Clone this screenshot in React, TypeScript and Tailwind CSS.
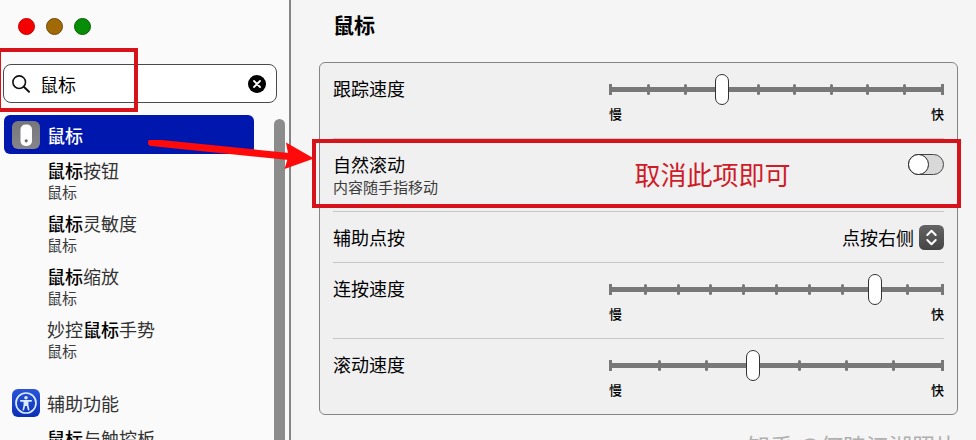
import { useState } from 'react';

type SliderRowProps = {
  id: string;
  label: string;
  steps: number;
  initial: number;
  last?: boolean;
};

const sidebarItems = [
  { before: '', after: '按钮' },
  { before: '', after: '灵敏度' },
  { before: '', after: '缩放' },
  { before: '妙控', after: '手势' },
];

const MouseIcon = () => (
  <svg viewBox="0 0 28 28" className="size-7 shrink-0" aria-hidden="true">
    <defs>
      <linearGradient id="mouse-bg" x1="0" y1="0" x2="0" y2="1">
        <stop offset="0" stopColor="#77777b" />
        <stop offset="1" stopColor="#85858a" />
      </linearGradient>
    </defs>
    <rect width="28" height="28" rx="6" fill="url(#mouse-bg)" />
    <rect x="8.5" y="3.5" width="11.5" height="21.5" rx="5" fill="#fff" />
    <circle cx="14.2" cy="19.8" r="1.6" fill="#6b6b70" />
  </svg>
);

const AccessibilityIcon = () => (
  <svg viewBox="0 0 28 28" className="size-7 shrink-0" aria-hidden="true">
    <defs>
      <linearGradient id="access-bg" x1="0" y1="0" x2="0" y2="1">
        <stop offset="0" stopColor="#2a55d8" />
        <stop offset="1" stopColor="#0b2fb5" />
      </linearGradient>
    </defs>
    <rect width="28" height="28" rx="6" fill="url(#access-bg)" />
    <circle cx="14" cy="14" r="10" fill="none" stroke="#d9ecff" strokeWidth="1.7" />
    <circle cx="14" cy="8.7" r="1.8" fill="#d9ecff" />
    <path
      d="M8.8 11.8h10.4M12.4 12v4.200l-1 4.400M15.600 12v4.200l1 4.400"
      fill="none"
      stroke="#d9ecff"
      strokeWidth="1.7"
      strokeLinecap="round"
      strokeLinejoin="round"
    />
    <path d="M12 11.800h4v5.200h-4z" fill="#d9ecff" />
  </svg>
);

const SliderRow = ({ id, label, steps, initial, last }: SliderRowProps) => {
  const [value, setValue] = useState(initial);

  return (
    <div
      className={
        last
          ? 'flex justify-between pt-[11px] pb-3'
          : 'flex justify-between border-b border-[#c6c8c8] pt-[11px] pb-3'
      }
    >
      <label htmlFor={id} className="text-lg leading-7 text-black">
        {label}
      </label>
      <div className="w-[335px]">
        <div className="grid h-7 items-center">
          <div className="col-start-1 row-start-1 flex h-[11px] items-center border-x-3 border-[#787878]">
            <div className="h-[5px] w-full bg-[#787878]" />
          </div>
          <div className="col-start-1 row-start-1 mx-0.5 flex justify-between">
            {Array.from({ length: steps }, (_, i) => (
              <span
                key={i}
                className="h-[11px] w-[3px] rounded-sm bg-[#787878] first:invisible last:invisible"
              />
            ))}
          </div>
          <input
            id={id}
            type="range"
            min={0}
            max={steps - 1}
            value={value}
            onChange={(e) => setValue(Number(e.target.value))}
            className="col-start-1 row-start-1 -mx-1 h-[31px] appearance-none bg-transparent [&::-webkit-slider-thumb]:h-[31px] [&::-webkit-slider-thumb]:w-3.5 [&::-webkit-slider-thumb]:appearance-none [&::-webkit-slider-thumb]:rounded-full [&::-webkit-slider-thumb]:border [&::-webkit-slider-thumb]:border-[#333] [&::-webkit-slider-thumb]:bg-white"
          />
        </div>
        <div className="flex justify-between text-[13px] leading-6 font-medium text-black">
          <span>慢</span>
          <span>快</span>
        </div>
      </div>
    </div>
  );
};

const Sidebar = () => {
  const [query, setQuery] = useState('鼠标');

  return (
    <aside className="flex w-[291px] shrink-0 flex-col border-r-2 border-[#858585] bg-[#fafafa]">
      <div className="flex gap-[11px] pt-[18px] pl-[18px]">
        <button aria-label="关闭" className="size-[17px] rounded-full border border-[#c80000] bg-[#f50000]" />
        <button aria-label="最小化" className="size-[17px] rounded-full border border-[#6e4a0c] bg-[#a16a06]" />
        <button aria-label="缩放" className="size-[17px] rounded-full border border-[#056005] bg-[#078d07]" />
      </div>

      <div className="relative mt-[29px] mr-3 ml-[3px] flex h-[39px] items-center rounded-lg border border-[#4a4a4a] bg-white pr-2.5 pl-2">
        <svg viewBox="0 0 18 18" className="size-[18px] shrink-0" aria-hidden="true">
          <circle cx="7.2" cy="7.2" r="6.3" fill="none" stroke="#111" strokeWidth="1.6" />
          <path d="M11.8 11.8l5.2 5" stroke="#111" strokeWidth="1.9" strokeLinecap="round" />
        </svg>
        <input
          type="text"
          aria-label="搜索"
          value={query}
          onChange={(e) => setQuery(e.target.value)}
          className="ml-2.5 min-w-0 flex-1 bg-transparent text-lg leading-7 text-black outline-none"
        />
        <button aria-label="清除" onClick={() => setQuery('')} className="size-[18px] shrink-0">
          <svg viewBox="0 0 18 18" className="size-full">
            <circle cx="9" cy="9" r="9" fill="#000" />
            <path d="M6 6l6 6M12 6l-6 6" stroke="#fff" strokeWidth="1.8" strokeLinecap="round" />
          </svg>
        </button>
        {/* highlight around the search term */}
        <div className="pointer-events-none absolute -top-[17px] -left-[7px] h-16 w-[141px] border-4 border-[#d6121a]" />
      </div>

      <div className="mt-3 flex min-h-0 flex-1 justify-between pr-1 pl-1">
        <nav className="w-[250px] overflow-hidden">
          <a href="#mouse" className="flex h-[39px] items-center gap-[7px] rounded-md bg-[#0017ad] pl-2 text-lg font-medium text-white">
            <MouseIcon />
            鼠标
          </a>
          <ul className="mt-1 pl-[43px]">
            {sidebarItems.map((item) => (
              <li key={item.before + item.after} className="mb-[9px]">
                <a href="#mouse" className="block">
                  <span className="block text-lg leading-6 text-[#333]">
                    {item.before}
                    <span className="font-medium text-black">鼠标</span>
                    {item.after}
                  </span>
                  <span className="block text-[15px] leading-5 text-[#3c3c3c]">鼠标</span>
                </a>
              </li>
            ))}
          </ul>
          <a href="#accessibility" className="mt-[22px] flex h-[39px] items-center gap-[7px] pl-2 text-lg text-[#333]">
            <AccessibilityIcon />
            辅助功能
          </a>
          <a href="#trackpad" className="mt-1 block pl-[43px] text-lg leading-6 text-[#333]">
            <span className="font-medium text-black">鼠标</span>与触控板
          </a>
        </nav>
        <div className="mt-1 w-[11px] rounded-t-full bg-[#8c8c8c]" />
      </div>
    </aside>
  );
};

const App = () => {
  const [natural, setNatural] = useState(false);

  return (
    <div className="relative flex h-screen overflow-hidden bg-[#f5f5f5] font-['Noto_Sans_CJK_SC',sans-serif] text-black">
      <Sidebar />

      <main className="min-w-0 flex-1 pt-2 pr-[18px] pl-7">
        <h1 className="pl-3.5 text-[21px] leading-8 font-bold">鼠标</h1>

        <section className="mt-[22px] rounded-md border border-[#858585] bg-[#f0f0f0] px-[13px]">
          <SliderRow id="tracking" label="跟踪速度" steps={10} initial={3} />

          <div className="relative flex justify-between border-b border-[#c6c8c8] pt-[11px] pb-[15px]">
            <div>
              <label htmlFor="natural" className="block text-lg leading-7">
                自然滚动
              </label>
              <p className="text-[15px] leading-[18px] text-[#3c3c3c]">内容随手指移动</p>
            </div>
            <div className="flex h-7 items-center">
              <input
                id="natural"
                type="checkbox"
                role="switch"
                checked={natural}
                onChange={(e) => setNatural(e.target.checked)}
                className="flex h-[21px] w-9 appearance-none rounded-full border border-[#444] bg-[#d8d8d8] before:-my-px before:-ml-px before:size-[21px] before:rounded-full before:border before:border-[#222] before:bg-white checked:bg-[#0017ad] checked:before:ml-3.5"
              />
            </div>
            {/* callout around the natural scrolling row */}
            <div className="pointer-events-none absolute top-0 -right-[17px] bottom-[3px] -left-[21px] flex items-center justify-center border-4 border-[#d6121a] pl-38 text-[26px] leading-8 text-[#cf1c28]">
              取消此项即可
            </div>
          </div>

          <div className="flex items-center justify-between border-b border-[#c6c8c8] py-[11px]">
            <label htmlFor="secondary" className="text-lg leading-7">
              辅助点按
            </label>
            <div className="relative flex items-center">
              <select id="secondary" className="appearance-none bg-transparent pr-[30px] text-lg leading-7 outline-none">
                <option>点按右侧</option>
                <option>点按左侧</option>
              </select>
              <svg viewBox="0 0 25 25" className="pointer-events-none absolute right-0 size-[25px]" aria-hidden="true">
                <defs>
                  <linearGradient id="stepper-bg" x1="0" y1="0" x2="0" y2="1">
                    <stop offset="0" stopColor="#646464" />
                    <stop offset="1" stopColor="#454545" />
                  </linearGradient>
                </defs>
                <rect width="25" height="25" rx="5.5" fill="url(#stepper-bg)" />
                <path
                  d="M8.3 10l4.2-4.2 4.2 4.2M8.3 15l4.2 4.2 4.2-4.2"
                  fill="none"
                  stroke="#fff"
                  strokeWidth="2"
                  strokeLinecap="round"
                  strokeLinejoin="round"
                />
              </svg>
            </div>
          </div>

          <SliderRow id="double-click" label="连按速度" steps={11} initial={8} />
          <SliderRow id="scrolling" label="滚动速度" steps={8} initial={3} last />
        </section>

        <p className="mt-3.5 text-right text-[23px] leading-8 whitespace-nowrap text-[#b0b0b0]">知乎 @何時江湖照片</p>
      </main>

      {/* arrow from the selected item to the callout */}
      <svg viewBox="0 0 170 30" className="pointer-events-none absolute top-[140px] left-[146px] h-[30px] w-[170px]" aria-hidden="true">
        <path d="M5.5 2.5L143 16.5" stroke="#ff0a0a" strokeWidth="7" strokeLinecap="round" />
        <path d="M140 2.500L168 18.500L138.500 29L142.500 16z" fill="#ff0a0a" />
      </svg>
    </div>
  );
};

export default App;
